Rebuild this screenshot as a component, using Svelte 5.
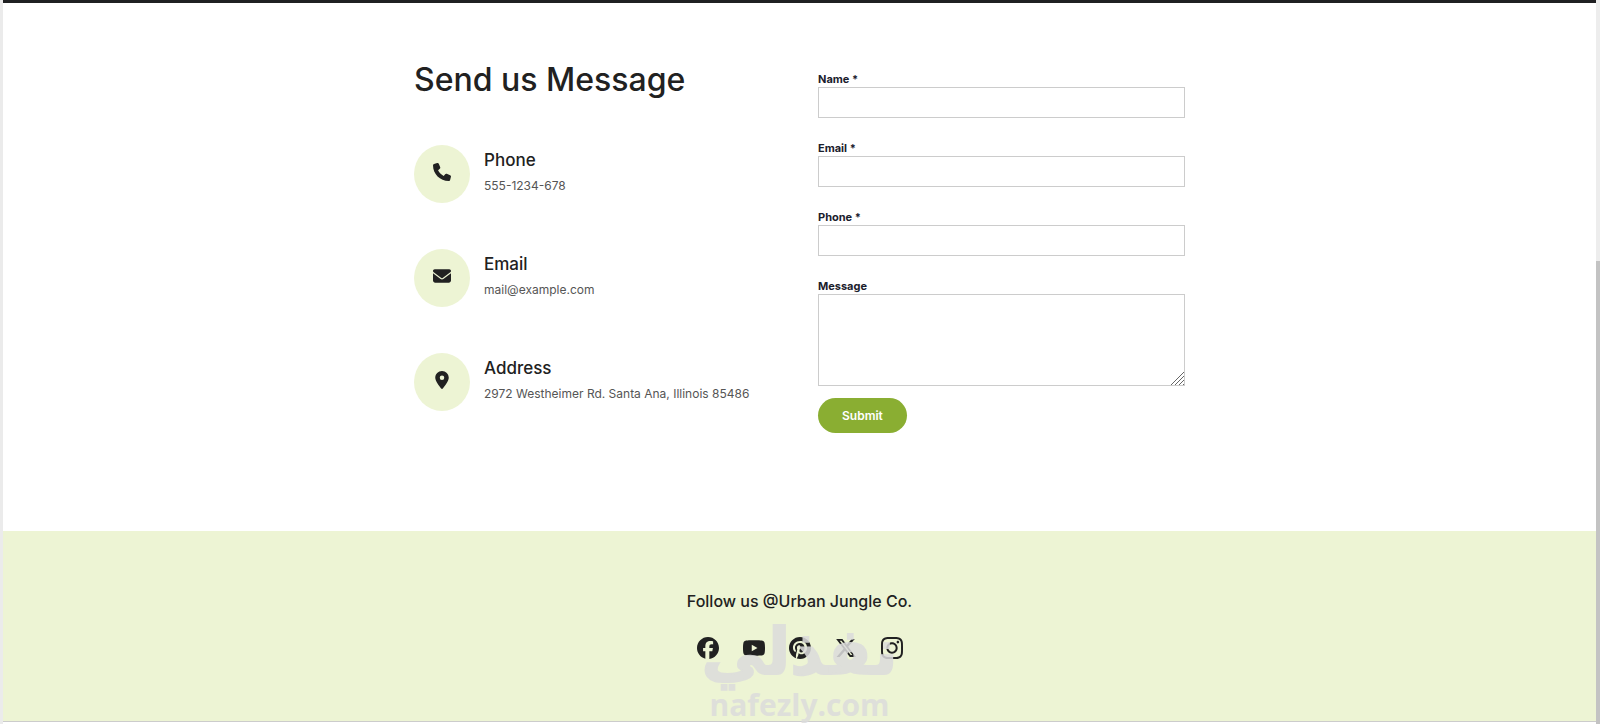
<script>
  const contacts = [
    {
      title: 'Phone',
      text: '555-1234-678',
      box: '0 0 512 512',
      icon: 'M164.9 24.6c-7.7-18.6-28-28.5-47.4-23.2l-88 24C12.1 30.2 0 46 0 64C0 311.4 200.6 512 448 512c18 0 33.8-12.1 38.6-29.5l24-88c5.3-19.4-4.6-39.7-23.2-47.4l-96-40c-16.3-6.8-35.2-2.1-46.3 11.6L304.7 368C234.300 334.700 177.300 277.700 144 207.300L193.300 167c13.700-11.200 18.400-30 11.600-46.300l-40-96z'
    },
    {
      title: 'Email',
      text: 'mail@example.com',
      box: '0 0 512 512',
      icon: 'M48 64C21.500 64 0 85.500 0 112c0 15.100 7.100 29.300 19.200 38.400L236.800 313.600c11.400 8.500 27 8.500 38.400 0L492.800 150.400c12.100-9.100 19.200-23.300 19.200-38.400c0-26.500-21.500-48-48-48H48zM0 176V384c0 35.300 28.700 64 64 64H448c35.300 0 64-28.700 64-64V176L294.400 339.200c-22.800 17.100-54 17.100-76.800 0L0 176z'
    },
    {
      title: 'Address',
      text: '2972 Westheimer Rd. Santa Ana, Illinois 85486',
      box: '-64 0 512 512',
      icon: 'M215.700 499.200C267 435 384 279.400 384 192C384 86 298 0 192 0S0 86 0 192c0 87.400 117 243 168.300 307.200c12.300 15.300 35.100 15.300 47.400 0zM192 128a64 64 0 1 1 0 128 64 64 0 1 1 0-128z'
    }
  ];

  const fields = [
    { id: 'name', label: 'Name *', type: 'text' },
    { id: 'email', label: 'Email *', type: 'email' },
    { id: 'phone', label: 'Phone *', type: 'tel' }
  ];

  const socials = [
    {
      name: 'Facebook',
      box: '0 0 512 512',
      icon: 'M512 256C512 114.600 397.400 0 256 0S0 114.600 0 256C0 376 82.700 476.800 194.200 504.500V334.200H141.400V256h52.800V222.300c0-87.100 39.400-127.500 125-127.500c16.200 0 44.200 3.200 55.700 6.400V172c-6-.6-16.500-1-29.600-1c-42 0-58.200 15.900-58.200 57.200V256h83.600l-14.400 78.200H287V510.100C413.800 494.800 512 386.900 512 256z'
    },
    {
      name: 'YouTube',
      box: '15 0 546 512',
      icon: 'M549.700 124.100c-6.300-23.700-24.800-42.300-48.300-48.600C458.800 64 288 64 288 64S117.200 64 74.600 75.500c-23.500 6.300-42 24.900-48.300 48.600-11.400 42.900-11.400 132.300-11.400 132.300s0 89.400 11.400 132.300c6.300 23.700 24.800 41.500 48.300 47.800C117.200 448 288 448 288 448s170.800 0 213.400-11.500c23.500-6.300 42-24.200 48.300-47.800 11.400-42.900 11.400-132.300 11.400-132.300s0-89.400-11.400-132.300zm-317.500 213.500V175.200l142.700 81.200-142.700 81.200z'
    },
    {
      name: 'Pinterest',
      box: '0 8 496 496',
      icon: 'M496 256c0 137-111 248-248 248-25.600 0-50.200-3.900-73.400-11.100 10.100-16.500 25.200-43.500 30.800-65 3-11.600 15.400-59 15.400-59 8.100 15.400 31.700 28.500 56.800 28.500 74.800 0 128.700-68.800 128.700-154.300 0-81.900-66.900-143.200-152.900-143.200-107 0-163.900 71.800-163.900 150.100 0 36.400 19.400 81.700 50.300 96.100 4.700 2.200 7.200 1.200 8.300-3.300.8-3.400 5-20.300 6.900-28.100.6-2.500.3-4.700-1.700-7.100-10.100-12.500-18.300-35.300-18.300-56.600 0-54.700 41.400-107.600 112-107.600 60.900 0 103.600 41.500 103.600 100.900 0 67.100-33.900 113.600-78 113.600-24.300 0-42.600-20.100-36.700-44.800 7-29.500 20.500-61.300 20.500-82.600 0-19-10.200-34.900-31.400-34.900-24.900 0-44.900 25.700-44.900 60.200 0 22 7.400 36.800 7.400 36.800s-24.500 103.800-29 123.200c-5 21.400-3 51.600-.9 71.200C65.400 450.900 0 361.100 0 256 0 119 111 8 248 8s248 111 248 248z'
    },
    {
      name: 'X',
      box: '0 0 512 512',
      icon: 'M389.200 48h70.600L305.600 224.200 487 464H345L233.700 318.600 106.500 464H35.800L200.700 275.500 26.800 48H172.400L272.900 180.900 389.200 48zM364.400 421.800h39.100L151.100 88h-42L364.400 421.800z'
    },
    {
      name: 'Instagram',
      box: '0 32 448 448',
      icon: 'M224.100 141c-63.600 0-114.900 51.300-114.900 114.900s51.300 114.900 114.900 114.900S339 319.500 339 255.900 287.700 141 224.100 141zm0 189.600c-41.100 0-74.700-33.500-74.700-74.700s33.500-74.700 74.700-74.700 74.700 33.500 74.700 74.700-33.600 74.700-74.700 74.700zm146.400-194.300c0 14.900-12 26.800-26.800 26.800-14.900 0-26.800-12-26.800-26.800s12-26.800 26.800-26.800 26.800 12 26.800 26.800zm76.100 27.200c-1.700-35.900-9.900-67.700-36.200-93.900-26.200-26.200-58-34.400-93.900-36.200-37-2.100-147.900-2.100-184.900 0-35.800 1.700-67.600 9.900-93.900 36.100s-34.400 58-36.200 93.900c-2.100 37-2.100 147.900 0 184.900 1.700 35.900 9.900 67.700 36.200 93.900s58 34.400 93.900 36.200c37 2.100 147.900 2.100 184.900 0 35.900-1.700 67.700-9.900 93.900-36.200 26.200-26.200 34.400-58 36.200-93.900 2.100-37 2.100-147.800 0-184.800zM398.800 388c-7.800 19.600-22.900 34.700-42.600 42.600-29.500 11.700-99.500 9-132.100 9s-102.700 2.600-132.100-9c-19.600-7.800-34.700-22.900-42.600-42.600-11.700-29.500-9-99.500-9-132.100s-2.600-102.700 9-132.100c7.800-19.600 22.900-34.700 42.600-42.600 29.500-11.700 99.500-9 132.100-9s102.700-2.600 132.100 9c19.600 7.800 34.700 22.900 42.600 42.600 11.700 29.500 9 99.500 9 132.100s2.700 102.700-9 132.100z'
    }
  ];
</script>

<div class="shell">
  <div class="page">
    <main>
      <section class="info">
        <h1>Send us Message</h1>
        <ul class="contacts">
          {#each contacts as c}
            <li>
              <span class="badge">
                <svg viewBox={c.box} aria-hidden="true"><path d={c.icon} /></svg>
              </span>
              <div class="detail">
                <h2>{c.title}</h2>
                <p>{c.text}</p>
              </div>
            </li>
          {/each}
        </ul>
      </section>

      <form onsubmit={(e) => e.preventDefault()}>
        {#each fields as f}
          <div class="field">
            <label for={f.id}>{f.label}</label>
            <input id={f.id} name={f.id} type={f.type} required />
          </div>
        {/each}
        <div class="field last">
          <label for="message">Message</label>
          <textarea id="message" name="message"></textarea>
        </div>
        <button type="submit">Submit</button>
      </form>
    </main>

    <footer>
      <h2>Follow us @Urban Jungle Co.</h2>
      <nav>
        {#each socials as s}
          <a href="#{s.name.toLowerCase()}" aria-label={s.name}>
            <svg viewBox={s.box} aria-hidden="true"><path d={s.icon} /></svg>
          </a>
        {/each}
      </nav>
      <div class="watermark">
        <span class="arabic" lang="ar" dir="rtl">نفذلي</span>
        <span class="latin">nafezly.com</span>
      </div>
    </footer>
  </div>
  <div class="track"></div>
</div>

<style>
  :global(body) {
    margin: 0;
    background: #fff;
  }

  .shell {
    display: flex;
    min-height: 100vh;
    box-sizing: border-box;
    font-family: Inter, sans-serif;
    color: #212121;
  }

  .page {
    flex: 1;
    display: flex;
    flex-direction: column;
    border-left: 3px solid #ebebeb;
  }

  .track {
    width: 4px;
    background: linear-gradient(#ededed 0 36%, #c3c3c3 36%);
  }

  h1,
  h2,
  p,
  ul {
    margin: 0;
    padding: 0;
  }

  main {
    flex: 1;
    display: grid;
    grid-template-columns: minmax(0, 367px) minmax(0, 367px);
    justify-content: center;
    align-items: start;
    gap: 37px;
    padding: 56px 24px 0;
    border-top: 3px solid #1f2022;
  }

  h1 {
    font-size: 32px;
    line-height: 42px;
    font-weight: 500;
  }

  .contacts {
    list-style: none;
    display: grid;
    gap: 46px;
    margin-top: 44px;
  }

  li {
    display: flex;
    align-items: center;
    gap: 14px;
  }

  .badge {
    flex: none;
    width: 56px;
    height: 58px;
    border-radius: 50%;
    background: #edf4d4;
    display: grid;
    place-items: center;
  }

  .badge svg {
    width: 18px;
    height: 18px;
    margin-bottom: 4px;
  }

  svg {
    display: block;
    fill: #212121;
  }

  .detail {
    padding-bottom: 4px;
  }

  h2 {
    font-size: 17px;
    line-height: 24px;
    font-weight: 500;
  }

  p {
    margin-top: 4px;
    font-size: 12px;
    line-height: 20px;
    color: #555;
  }

  form {
    padding-top: 12px;
  }

  .field {
    display: flex;
    flex-direction: column;
    margin-bottom: 22px;
  }

  .field.last {
    margin-bottom: 12px;
  }

  label {
    font-size: 11px;
    line-height: 16px;
    font-weight: 700;
    color: #1a202c;
  }

  input,
  textarea {
    box-sizing: border-box;
    width: 100%;
    height: 31px;
    margin: 0;
    padding: 4px 8px;
    border: 1px solid #ccc;
    border-radius: 0;
    background: #fff;
    font: 12px/20px Inter, sans-serif;
  }

  textarea {
    height: 92px;
    resize: vertical;
  }

  textarea::-webkit-resizer {
    background: url("data:image/svg+xml,%3Csvg xmlns='http://www.w3.org/2000/svg' width='13' height='13'%3E%3Cpath d='M0 13L13 0M4 13L13 4M8 13L13 8M12 13L13 12' stroke='%23666' fill='none'/%3E%3C/svg%3E")
      no-repeat right bottom;
  }

  button {
    height: 35px;
    padding: 0 24px;
    border: 0;
    border-radius: 18px;
    background: #8aae32;
    color: #fff;
    font: 600 12px/20px Inter, sans-serif;
  }

  footer {
    position: relative;
    display: flex;
    flex-direction: column;
    align-items: center;
    gap: 24px;
    padding: 58px 24px 62px;
    background: #edf4d4;
    border-bottom: 1px solid #ccc;
    margin-bottom: 2px;
  }

  footer h2 {
    font-size: 16px;
  }

  nav {
    display: flex;
    gap: 24px;
  }

  nav svg {
    width: 22px;
    height: 22px;
  }

  .watermark {
    position: absolute;
    top: 84px;
    left: 50%;
    transform: translateX(-50%);
    display: flex;
    flex-direction: column;
    align-items: center;
    color: #dcdcdc;
    opacity: 0.85;
    pointer-events: none;
    white-space: nowrap;
  }

  .arabic {
    font: 700 64px/74px 'DejaVu Sans', sans-serif;
    -webkit-text-stroke: 2px #dcdcdc;
  }

  .latin {
    font: 700 30px/32px 'Open Sans', sans-serif;
  }
</style>
